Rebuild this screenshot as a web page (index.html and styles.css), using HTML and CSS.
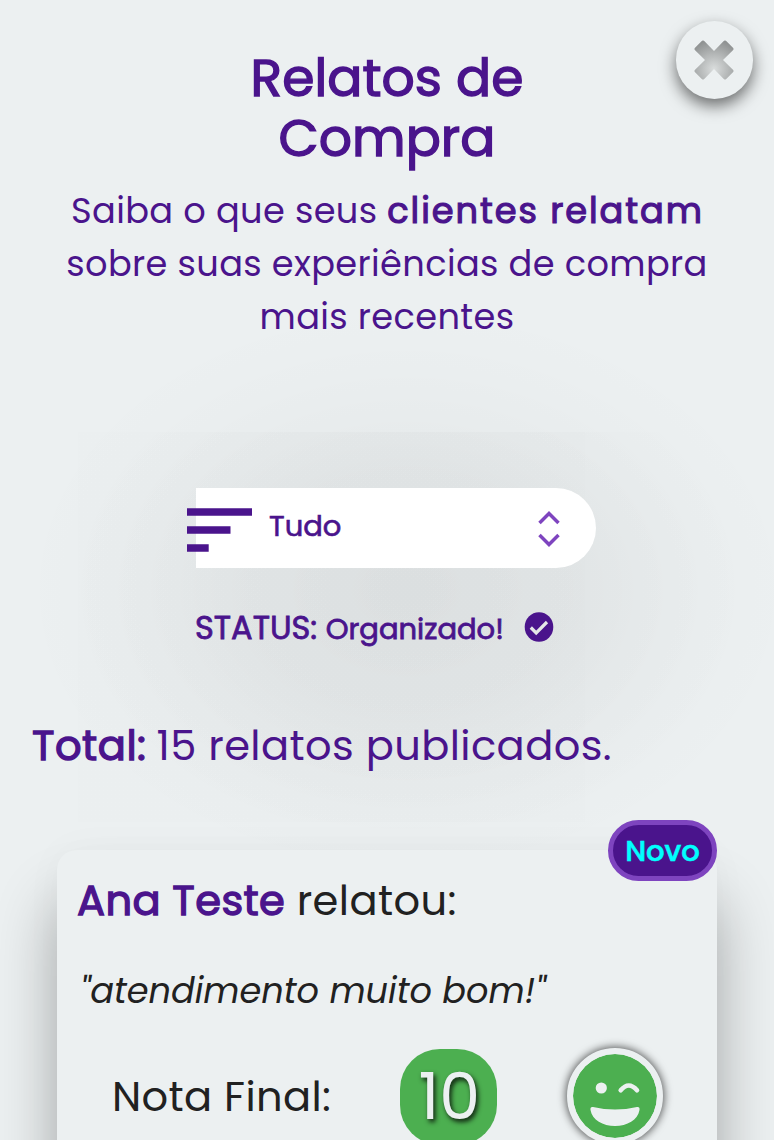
FILE: index.html
```html
<!DOCTYPE html>
<html lang="pt-BR">
<head>
<meta charset="utf-8">
<title>Relatos de Compra</title>
<link rel="stylesheet" href="styles.css">
</head>
<body>
<main class="page">
  <button class="close" aria-label="Fechar">
    <svg class="close-icon" viewBox="0 0 40 40">
      <defs>
        <radialGradient id="metal" gradientUnits="userSpaceOnUse" cx="20" cy="29" r="29">
          <stop offset="0" stop-color="#dadddd"/>
          <stop offset=".5" stop-color="#b5b8b8"/>
          <stop offset="1" stop-color="#8f9292"/>
        </radialGradient>
      </defs>
      <path fill="url(#metal)" d="M8 .8Q9 0 10 .8L20 11.1 30 .8Q31 0 32 .8L39.2 8Q40 9 39.2 10L29 20 39.2 30Q40 31 39.2 32L32 39.2Q31 40 30 39.2L20 28.9 10 39.2Q9 40 8 39.2L.8 32Q0 31 .8 30L11 20 .8 10Q0 9 .8 8Z"/>
    </svg>
  </button>

  <header class="header">
    <h1 class="title">Relatos de<br>Compra</h1>
    <p class="intro">Saiba o que seus <b class="intro-strong">clientes relatam</b><br>sobre suas experiências de compra<br>mais recentes</p>
  </header>

  <section class="filter">
    <div class="select">
      <svg class="sort-icon" viewBox="0 0 65 44"><path fill="#4a148c" d="M0 .3h65v7.400H0zM0 18.300h43.500v7.400H0zM0 36.300h21.700v7.400H0z"/></svg>
      <span class="select-value">Tudo</span>
      <svg class="arrows" viewBox="0 0 22 36"><path fill="none" stroke="#7e44bf" stroke-width="3.500" d="M1.500 12 11 2.500 20.500 12M1.500 24 11 33.500 20.500 24"/></svg>
    </div>
    <div class="status">
      <span class="status-label">STATUS:</span>
      <span class="status-value">Organizado!</span>
      <svg class="check" viewBox="0 0 30 30"><ellipse cx="15" cy="15" rx="14.300" ry="14.800" fill="#4a148c"/><path fill="none" stroke="#e5e7e8" stroke-width="3.200" d="M6.800 15.500 12.200 20.900 23 10"/></svg>
    </div>
  </section>

  <p class="total"><b class="total-label">Total:</b><span class="total-value">15 relatos publicados.</span></p>

  <article class="card">
    <span class="badge">Novo</span>
    <p class="author"><b class="author-name">Ana Teste</b><span class="author-verb">relatou:</span></p>
    <p class="quote">"atendimento muito bom!"</p>
    <div class="rating">
      <span class="rating-label">Nota Final:</span>
      <span class="score">10</span>
      <svg class="face" viewBox="0 0 84 84">
        <circle cx="42" cy="42" r="42" fill="#4caf50"/>
        <circle cx="28.300" cy="34" r="5.600" fill="#ecf0f1"/>
        <path fill="none" stroke="#ecf0f1" stroke-width="4.600" stroke-linecap="round" d="M47.700 36.300Q55.700 26.800 64 36.300"/>
        <path fill="#ecf0f1" d="M20 53Q42 58 64 53Q67 52.500 66.500 56C65 66 54 72 42 72S19 66 17.500 56Q17 52.500 20 53Z"/>
      </svg>
    </div>
  </article>
</main>
</body>
</html>
```
FILE: styles.css
```css
* { box-sizing: border-box; }

body {
  margin: 0;
  background: #ecf0f1;
  font-family: "Poppins", "Inter", sans-serif;
  font-weight: 400;
  color: #212121;
}

h1, p { margin: 0; }
b { font-weight: 400; }
svg { display: block; flex: none; }

.page {
  position: relative;
  height: 1140px;
  overflow: hidden;
  padding-top: 48px;
  background:
    linear-gradient(rgba(0, 0, 0, .005), rgba(0, 0, 0, .005)) 78px 432px / 507px 390px no-repeat,
    radial-gradient(ellipse 345px 260px at 330px 158px, rgba(0, 0, 0, .03), rgba(0, 0, 0, .019) 50%, transparent) 78px 432px / 696px 390px no-repeat,
    radial-gradient(ellipse 390px 290px at 407px 590px, rgba(0, 0, 0, .04), rgba(0, 0, 0, .026) 42%, rgba(0, 0, 0, .008) 78%, transparent),
    #ecf0f1;
}

.close {
  position: absolute;
  top: 21px;
  right: 21px;
  width: 77.5px;
  height: 77.5px;
  display: flex;
  align-items: center;
  justify-content: center;
  padding: 0;
  border: 0;
  border-radius: 50%;
  background: #ecf0f1;
  box-shadow: 0 7px 16px rgba(0, 0, 0, .55);
}
.close-icon { width: 40px; height: 40px; }

.header {
  text-align: center;
  color: #4a148c;
}
.title {
  font-size: 52px;
  line-height: 60px;
  font-weight: 400;
  letter-spacing: .05px;
  -webkit-text-stroke: .027em currentColor;
}

.intro {
  margin-top: 16px;
  font-size: 35.2px;
  line-height: 53px;
  letter-spacing: .37px;
  white-space: nowrap;
}
.intro-strong {
  letter-spacing: 1.95px;
  margin-right: -1px;
  -webkit-text-stroke: .033em currentColor;
}

.filter {
  width: 400px;
  margin: 145px 0 0 196px;
  color: #4a148c;
}
.select {
  height: 80px;
  display: flex;
  align-items: center;
  padding-right: 36px;
  border-radius: 0 40px 40px 0;
  background: #fff;
}
.sort-icon { width: 65px; height: 44px; margin: 4px 0 0 -9px; }
.select-value {
  margin: -3px 0 0 17px;
  font-size: 29px;
  -webkit-text-stroke: .022em currentColor;
}
.arrows { width: 22px; height: 36px; margin: 2px 0 0 auto; }

.status {
  height: 50px;
  margin-top: 35px;
  display: flex;
  line-height: 50px;
  -webkit-text-stroke: .8px currentColor;
}
.status-label { font-size: 32px; margin-left: -1px; }
.status-value { font-size: 29px; margin: 1px 0 0 8.5px; }
.check { width: 30px; height: 30px; margin: 9px 0 0 20px; }

.total {
  margin: 63px 0 0 32px;
  font-size: 41.6px;
  line-height: 60px;
  color: #4a148c;
  white-space: nowrap;
}
.total-label { letter-spacing: .5px; -webkit-text-stroke: .032em currentColor; }
.total-value { letter-spacing: .4px; margin-left: 10px; }

.card {
  position: relative;
  width: 660px;
  height: 420px;
  margin: 74px 0 0 57px;
  padding: 21px 0 0 20px;
  border-radius: 20px;
  background: #ecf0f1;
  box-shadow: 0 52px 62px rgba(0, 0, 0, .3), 0 0 40px rgba(0, 0, 0, .03);
}
.badge {
  position: absolute;
  top: -30px;
  right: 0;
  width: 109px;
  height: 61px;
  border: 5px solid #7e44bf;
  border-radius: 31px;
  background: #4a148c;
  color: #00ffff;
  font-size: 29px;
  font-weight: 500;
  line-height: 52px;
  text-align: center;
  -webkit-text-stroke: .02em currentColor;
}

.author { font-size: 41.6px; line-height: 60px; white-space: nowrap; }
.author-name {
  color: #4a148c;
  letter-spacing: .37px;
  -webkit-text-stroke: .032em currentColor;
}
.author-verb { letter-spacing: .4px; margin-left: 11.5px; }

.quote {
  margin: 35px 0 0 3px;
  font-size: 35.2px;
  line-height: 50px;
  font-style: italic;
  letter-spacing: -.05px;
  white-space: nowrap;
}

.rating {
  display: flex;
  align-items: center;
  margin: 31px 0 0 33px;
  height: 98px;
}
.rating-label { width: 290px; padding-left: 2px; font-size: 41.6px; letter-spacing: .37px; }
.score {
  width: 97px;
  height: 96px;
  margin-top: 2px;
  padding-left: 1.5px;
  border-radius: 40px;
  background: #4caf50;
  color: #ecf0f1;
  font-size: 65px;
  line-height: 95px;
  text-align: center;
  text-shadow: 2px 3px 5px rgba(0, 0, 0, .85);
}
.face {
  width: 96px;
  height: 96px;
  margin-left: 70px;
  border: 6px solid #ecf0f1;
  border-radius: 50%;
  background: #ecf0f1;
  box-shadow: 0 0 8px 1px rgba(0, 0, 0, .65);
}
```
